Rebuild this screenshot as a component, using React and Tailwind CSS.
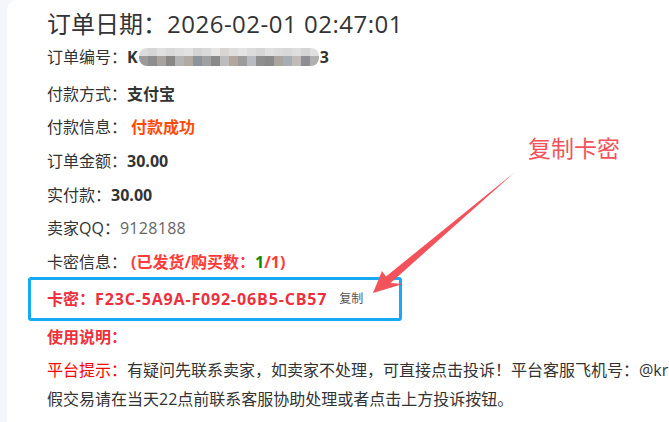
import React from "react";

const topRow = ["#dcdcdc","#d6d6d6","#e0e0e0","#d9d9d9","#dedede","#e2e2e2","#d4d4d4","#dadada","#e6e6e6","#d8d5d2","#dedede","#e4e4e4","#dcdcdc","#d6d6d6","#e0e0e0","#dcdcdc","#d8d8d8","#dedede","#d5d5d5","#e0e0e0"];
const botRow = ["#9a9a9a","#8e8e8e","#a8a39e","#888888","#b4b4b4","#b0aaa2","#8c939a","#a0a0a0","#8a8a8a","#bcbcbc","#b2a79e","#9c9c9c","#b8bcc0","#8e8e8e","#8a8a8a","#aaa59f","#a8adb2","#c0bbb6","#8e8e94","#b0b0b0"];

function Blur() {
  return (
    <span className="inline-flex flex-col w-[180px] h-[18px] rounded-[8px] overflow-hidden align-middle mx-[1px]">
      <span className="flex h-[8px]">
        {topRow.map((c, i) => (
          <span key={i} className="flex-1" style={{ backgroundColor: c }} />
        ))}
      </span>
      <span className="flex h-[10px]">
        {botRow.map((c, i) => (
          <span key={i} className="flex-1" style={{ backgroundColor: c }} />
        ))}
      </span>
    </span>
  );
}

function Row({ label, children, extra = "" }) {
  return (
    <div className={"h-[33.6px] flex items-center whitespace-nowrap " + extra}>
      <span className="text-[#333]">{label}</span>
      {children}
    </div>
  );
}

export default function App() {
  return (
    <div
      className="w-[669px] h-[422px] bg-[#f5f6fb] flex overflow-hidden relative"
      style={{ fontFamily: "'Open Sans', 'Noto Sans CJK SC', sans-serif" }}
    >
      <div className="w-[7px] shrink-0" />
      <div className="flex-1 bg-white rounded-tl-[10px] pl-[40px] overflow-hidden text-[16px] text-[#333]">
        <div className="mt-[8px] h-[32px] leading-[32px] text-[24px] text-[#333] whitespace-nowrap">
          订单日期：<span className="tracking-[0.5px]">2026-02-01 02:47:01</span>
        </div>
        <div className="h-[34px] mb-[3px] flex items-center whitespace-nowrap">
          <span>订单编号：</span>
          <span className="font-bold">K</span>
          <Blur />
          <span className="font-bold">3</span>
        </div>
        <Row label="付款方式：">
          <span className="font-bold">支付宝</span>
        </Row>
        <Row label="付款信息：">
          <span className="font-bold text-[#ff4a0a] ml-[4px]">付款成功</span>
        </Row>
        <Row label="订单金额：">
          <span className="font-bold">30.00</span>
        </Row>
        <Row label="实付款：">
          <span className="font-bold">30.00</span>
        </Row>
        <Row label="卖家QQ：">
          <span className="text-[#666] tracking-[0.3px]">9128188</span>
        </Row>
        <Row label="卡密信息：">
          <span className="font-bold text-[#ff3b3b] ml-[4px]">
            (已发货/购买数：<span className="text-[#0a8a0a]">1</span>/1)
          </span>
        </Row>
        <div className="-ml-[19px] -mt-[2px] w-[374px] h-[44px] border-[3px] border-[#17a9f3] rounded-[3px] flex items-center pl-[16px] whitespace-nowrap">
          <span className="font-bold text-[#ee2f3c]">
            卡密：<span className="tracking-[0.85px]">F23C-5A9A-F092-06B5-CB57</span>
          </span>
          <span className="ml-[12px] text-[12px] text-[#555]">复制</span>
        </div>
        <div className="h-[33px] flex items-center font-bold text-[#ee2f3c]">使用说明：</div>
        <div className="mt-[2px] leading-[29px]">
          <div className="whitespace-nowrap">
            <span className="text-[#ff0000]">平台提示：</span>
            有疑问先联系卖家，如卖家不处理，可直接点击投诉！平台客服飞机号：@kr
          </div>
          <div className="whitespace-nowrap">假交易请在当天22点前联系客服协助处理或者点击上方投诉按钮。</div>
        </div>
      </div>

      <div className="absolute left-[528px] top-[132px] text-[23px] leading-[32px] text-[#f4525a] whitespace-nowrap">
        复制卡密
      </div>
      <svg className="absolute left-0 top-0" width="669" height="422" viewBox="0 0 669 422">
        <polygon
          points="373,293 382,271 386,276.5 515,172 390.5,283 403,284"
          fill="#f4525a"
        />
      </svg>
    </div>
  );
}
